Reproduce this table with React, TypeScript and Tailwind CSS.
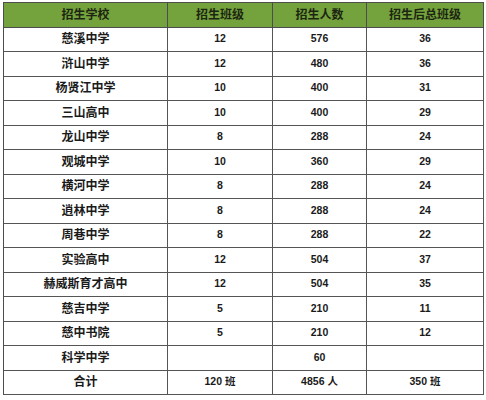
import React from "react";

const rows: [string, string, string, string][] = [
  ["慈溪中学", "12", "576", "36"],
  ["浒山中学", "12", "480", "36"],
  ["杨贤江中学", "10", "400", "31"],
  ["三山高中", "10", "400", "29"],
  ["龙山中学", "8", "288", "24"],
  ["观城中学", "10", "360", "29"],
  ["横河中学", "8", "288", "24"],
  ["逍林中学", "8", "288", "24"],
  ["周巷中学", "8", "288", "22"],
  ["实验高中", "12", "504", "37"],
  ["赫威斯育才高中", "12", "504", "35"],
  ["慈吉中学", "5", "210", "11"],
  ["慈中书院", "5", "210", "12"],
  ["科学中学", "", "60", ""],
  ["合计", "120 班", "4856 人", "350 班"],
];

const headers = ["招生学校", "招生班级", "招生人数", "招生后总班级"];

export default function App() {
  return (
    <div className="w-[486px] h-[400px] bg-white overflow-hidden">
      <div className="ml-[3px] mt-[2px] w-[481px] border-l border-t border-[#4d4d4d] grid grid-cols-[164px_105px_94px_117px] auto-rows-[24.5px] font-['Liberation_Sans','Noto_Sans_CJK_SC',sans-serif] font-bold text-[#1a1a1a]">
        {headers.map((h) => (
          <div
            key={h}
            className="bg-[#74a23c] border-r border-b border-[#4d4d4d] flex items-center justify-center text-[12px] text-[#1c2612]"
          >
            {h}
          </div>
        ))}
        {rows.map((r) =>
          r.map((c, i) => (
            <div
              key={r[0] + i}
              className={
                "border-r border-b border-[#555] flex items-center justify-center " +
                (i === 0 ? "text-[12px]" : "text-[10.5px]")
              }
            >
              {c}
            </div>
          ))
        )}
      </div>
    </div>
  );
}
